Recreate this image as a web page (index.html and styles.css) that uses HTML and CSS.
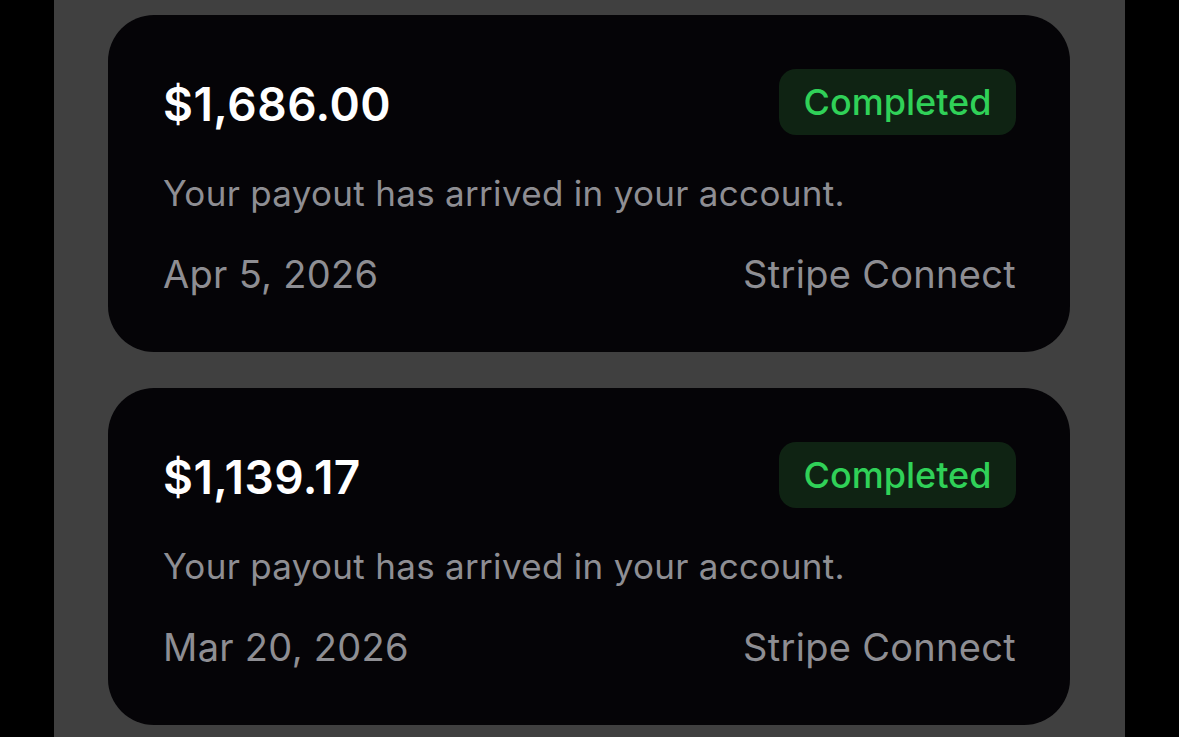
FILE: index.html
```html
<!DOCTYPE html>
<html lang="en">
<head>
	<meta charset="UTF-8" />
	<meta name="viewport" content="width=device-width, initial-scale=1.0" />
	<title>Payouts</title>
	<link rel="stylesheet" href="styles.css">
</head>
<body>
	<div class="panel">
		<div class="payout">
			<div class="payout-head">
				<strong class="amount">$1,686.00</strong>
				<span class="badge">Completed</span>
			</div>
			<p class="desc">Your payout has arrived in your account.</p>
			<div class="payout-foot">
				<span>Apr 5, 2026</span>
				<span>Stripe Connect</span>
			</div>
		</div>
		<div class="payout">
			<div class="payout-head">
				<strong class="amount">$1,139.17</strong>
				<span class="badge">Completed</span>
			</div>
			<p class="desc">Your payout has arrived in your account.</p>
			<div class="payout-foot">
				<span>Mar 20, 2026</span>
				<span>Stripe Connect</span>
			</div>
		</div>
	</div>
</body>
</html>
```

FILE: styles.css
```css
html, body{
	margin: 0;
	height: 100%;
	background: #000;
}
body{
	font-family: Inter, "Liberation Sans", sans-serif;
	overflow: hidden;
}
.panel{
	margin: 0 54px;
	min-height: 100%;
	padding: 15px 55px 0 54px;
	background: #404040;
	display: flex;
	flex-direction: column;
	gap: 36px;
	box-sizing: border-box;
}
.payout{
	background: #050407;
	border-radius: 46px;
	padding: 54px 54px 57px 55px;
	height: 337px;
	box-sizing: border-box;
}
.payout-head{
	display: flex;
	align-items: center;
	justify-content: space-between;
	height: 66px;
}
.amount{
	color: #fff;
	font-size: 46px;
	line-height: 66px;
	font-weight: 600;
	letter-spacing: 0.5px;
	padding-top: 3px;
}
.badge{
	display: inline-flex;
	align-items: center;
	justify-content: center;
	width: 237px;
	height: 66px;
	border-radius: 17px;
	background: #0f2313;
	color: #30d158;
	font-size: 36px;
	font-weight: 500;
}
.desc{
	margin: 38px 0 0;
	line-height: 40px;
	font-size: 35px;
	letter-spacing: 0.3px;
	color: #8e8e93;
}
.payout-foot{
	display: flex;
	justify-content: space-between;
	margin-top: 41px;
	line-height: 40px;
	font-size: 38px;
	letter-spacing: 0.3px;
	color: #8e8e93;
}
```
